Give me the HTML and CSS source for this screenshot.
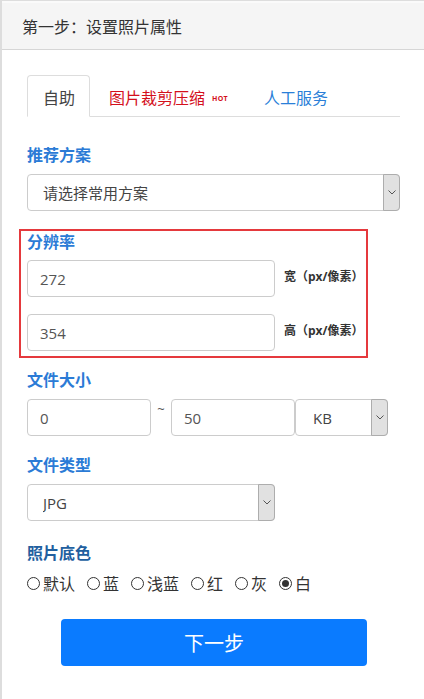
FILE: index.html
```html
<!DOCTYPE html>
<html lang="zh-CN">
<head>
    <meta charset="UTF-8">
    <meta name="viewport" content="width=device-width, initial-scale=1.0">
    <title>设置照片属性</title>
    <link rel="stylesheet" href="styles.css">
</head>
<body>
    <div class="panel">
        <div class="panel-heading">第一步：设置照片属性</div>

        <div class="panel-body">
            <ul class="tabs">
                <li class="tab active">自助</li>
                <li class="tab tab-red">图片裁剪压缩<span class="hot">HOT</span></li>
                <li class="tab tab-blue">人工服务</li>
            </ul>

            <div class="group first">
                <label class="group-title">推荐方案</label>
                <div class="select-box wide">
                    <select>
                        <option>请选择常用方案</option>
                    </select>
                    <span class="arrow"><svg width="8" height="5" viewBox="0 0 8 5"><path d="M0.5 0.5 L4 4 L7.5 0.5" fill="none" stroke="#555" stroke-width="1"/></svg></span>
                </div>
            </div>

            <div class="group resolution">
                <label class="group-title">分辨率</label>
                <div class="size-row">
                    <input class="field" type="text" value="272">
                    <span class="unit">宽（px/像素）</span>
                </div>
                <div class="size-row">
                    <input class="field" type="text" value="354">
                    <span class="unit">高（px/像素）</span>
                </div>
            </div>

            <div class="group">
                <label class="group-title">文件大小</label>
                <div class="filesize-row">
                    <input class="field small" type="text" value="0">
                    <span class="tilde">~</span>
                    <input class="field small" type="text" value="50">
                    <div class="select-box unit-select">
                        <select>
                            <option>KB</option>
                        </select>
                        <span class="arrow"><svg width="8" height="5" viewBox="0 0 8 5"><path d="M0.5 0.5 L4 4 L7.5 0.5" fill="none" stroke="#555" stroke-width="1"/></svg></span>
                    </div>
                </div>
            </div>

            <div class="group">
                <label class="group-title">文件类型</label>
                <div class="select-box medium">
                    <select>
                        <option>JPG</option>
                    </select>
                    <span class="arrow"><svg width="8" height="5" viewBox="0 0 8 5"><path d="M0.5 0.5 L4 4 L7.5 0.5" fill="none" stroke="#555" stroke-width="1"/></svg></span>
                </div>
            </div>

            <div class="group bg-color">
                <label class="group-title dark">照片底色</label>
                <div class="colors">
                    <label class="radio"><span class="dot"></span>默认</label>
                    <label class="radio"><span class="dot"></span>蓝</label>
                    <label class="radio"><span class="dot"></span>浅蓝</label>
                    <label class="radio"><span class="dot"></span>红</label>
                    <label class="radio"><span class="dot"></span>灰</label>
                    <label class="radio"><span class="dot checked"></span>白</label>
                </div>
            </div>

            <div class="actions">
                <button class="btn-next">下一步</button>
            </div>
        </div>
    </div>
</body>
</html>
```

FILE: styles.css
```css
:root {
    --label-color: #2b7bd6;
    --label-dark: #22609f;
    --border-color: #ddd;
    --input-border: #ccc;
    --text-color: #333;
}

* {
    margin: 0;
    padding: 0;
    box-sizing: border-box;
}

body {
    font-family: "Open Sans", "Noto Sans CJK SC", sans-serif;
    color: var(--text-color);
    background-color: #fff;
}

.panel {
    min-height: 699px;
    border-top: 1px solid var(--border-color);
    border-left: 2px solid var(--border-color);
}

.panel-heading {
    height: 49px;
    line-height: 47px;
    padding-left: 20px;
    font-family: "Noto Sans CJK SC", sans-serif;
    font-size: 16px;
    color: #333;
    background-color: #f5f5f5;
    border-top: 2px solid #fafafa;
    border-bottom: 1px solid #d6d6d6;
}

.panel-body {
    padding: 25px 24px 0 25px;
}

/* tabs */
.tabs {
    list-style: none;
    display: flex;
    border-bottom: 1px solid var(--border-color);
    height: 42px;
}

.tab {
    height: 42px;
    line-height: 44px;
    padding: 0 16px;
    margin-right: 2px;
    font-size: 16px;
    border: 1px solid transparent;
    border-radius: 4px 4px 0 0;
}

.tab.active {
    color: #444;
    background-color: #fff;
    border-color: var(--border-color);
    border-bottom-color: #fff;
    padding: 0 14px 0 15px;
}

.tab-red {
    color: #d4101c;
}

.tab-blue {
    color: #2a7fd8;
}

.hot {
    font-size: 7px;
    font-weight: bold;
    margin-left: 7px;
    vertical-align: 3px;
    letter-spacing: 0.3px;
}

/* form groups */
.group {
    margin-top: 18px;
}

.group.first {
    margin-top: 27px;
}

.group-title {
    display: block;
    font-size: 16px;
    font-weight: bold;
    line-height: 22px;
    margin-bottom: 8px;
    color: var(--label-color);
}

.group-title.dark {
    color: var(--label-dark);
}

.field {
    height: 37px;
    border: 1px solid var(--input-border);
    border-radius: 4px;
    padding: 0 12px;
    font-family: "Open Sans", "Noto Sans CJK SC", sans-serif;
    font-size: 15px;
    color: #555;
    outline: none;
}

.select-box {
    display: flex;
    height: 37px;
    border: 1px solid var(--input-border);
    border-radius: 4px;
    background-color: #fff;
}

.select-box select {
    flex: 1;
    border: none;
    background: transparent;
    appearance: none;
    -webkit-appearance: none;
    padding-left: 15px;
    font-family: "Open Sans", "Noto Sans CJK SC", sans-serif;
    font-size: 15px;
    color: #444;
    outline: none;
}

.select-box .arrow {
    width: 17px;
    margin: -1px -1px -1px 0;
    display: flex;
    align-items: center;
    justify-content: center;
    background-color: #e1e1e1;
    border: 1px solid #adadad;
    border-radius: 0 4px 4px 0;
}

.select-box.wide {
    width: 373px;
}

.select-box.medium {
    width: 248px;
}

/* resolution box */
.resolution {
    width: 349px;
    margin-left: -8px;
    padding: 0 0 5px 6px;
    border: 2px solid #e5393d;
}

.resolution .group-title {
    margin-bottom: 7px;
}

.size-row {
    display: flex;
    align-items: center;
    gap: 9px;
    margin-bottom: 17px;
}

.size-row:last-child {
    margin-bottom: 0;
}

.size-row .field {
    width: 248px;
}

.unit {
    font-size: 12px;
    font-weight: bold;
    color: #333;
    margin-top: -6px;
}

.resolution + .group {
    margin-top: 11px;
}

/* file size */
.filesize-row {
    display: flex;
    align-items: flex-start;
}

.field.small {
    width: 124px;
}

.tilde {
    width: 20px;
    text-align: center;
    font-size: 13px;
    line-height: 20px;
    color: #555;
}

.unit-select {
    width: 93px;
}

.unit-select select {
    padding-left: 17px;
}

/* colors */
.bg-color {
    margin-top: 21px;
}

.colors {
    display: flex;
    gap: 12px;
    font-size: 16px;
    color: #333;
    font-family: "Noto Sans CJK SC", sans-serif;
    line-height: 22px;
}

.radio {
    display: flex;
    align-items: center;
    gap: 3px;
}

.dot {
    width: 13px;
    height: 13px;
    border: 1px solid #333;
    border-radius: 50%;
    display: flex;
    align-items: center;
    justify-content: center;
}

.dot.checked::after {
    content: "";
    width: 7px;
    height: 7px;
    border-radius: 50%;
    background-color: #333;
}

/* next button */
.actions {
    padding: 25px 0 0 34px;
}

.btn-next {
    width: 306px;
    height: 47px;
    background-color: #0a7bff;
    color: white;
    border: none;
    border-radius: 4px;
    font-family: "Noto Sans CJK SC", sans-serif;
    font-size: 20px;
    cursor: pointer;
}
```
